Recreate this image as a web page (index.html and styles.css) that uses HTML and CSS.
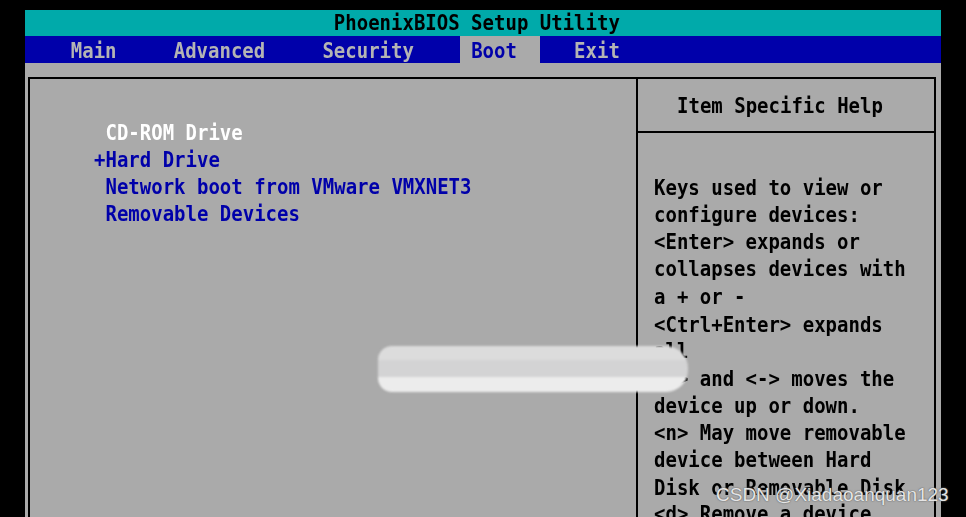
FILE: index.html
```html
<!DOCTYPE html>
<html lang="en">
<head>
    <meta charset="UTF-8" />
    <meta name="viewport" content="width=device-width, initial-scale=1" />
    <title>PhoenixBIOS Setup Utility</title>
    <link rel="stylesheet" href="styles.css">
</head>
<body>

    <div class="screen">

        <!-- Barra de titulo -->
        <div class="title-bar"><span class="glyphs">                           PhoenixBIOS Setup Utility</span></div>

        <!-- Menu superior -->
        <div class="menu-bar">
            <span class="glyphs">    Main     Advanced     Security    </span><span class="tab-active"><span class="glyphs"> Boot  </span></span><span class="glyphs">   Exit</span>
        </div>

        <div class="frame">

            <!-- Orden de arranque -->
            <div class="boot-list">
                <div class="rows"><span class="item-selected"> CD-ROM Drive</span>
<span class="item">+Hard Drive</span>
<span class="item"> Network boot from VMware VMXNET3</span>
<span class="item"> Removable Devices</span></div>
            </div>

            <!-- Ayuda -->
            <div class="help">
                <div class="help-title"><span class="glyphs">Item Specific Help</span></div>
                <div class="help-text">
                    <div class="rows">Keys used to view or
configure devices:
&lt;Enter&gt; expands or
collapses devices with
a + or -
&lt;Ctrl+Enter&gt; expands
all
&lt;+&gt; and &lt;-&gt; moves the
device up or down.
&lt;n&gt; May move removable
device between Hard
Disk or Removable Disk
&lt;d&gt; Remove a device</div>
                </div>
            </div>

        </div>
    </div>

    <div class="redacted"></div>
    <div class="watermark">CSDN @Xiadaoanquan123</div>

</body>
</html>
```

FILE: styles.css
```css
* {
    box-sizing: border-box;
}
html, body {
    margin: 0;
    height: 100%;
    background-color: #000;
    overflow: hidden;
}
body {
    padding: 10px 0 0 25px;
}
.screen {
    width: 916px;
    height: 507px;
    background-color: #aaaaaa;
    font-family: "DejaVu Sans Mono", monospace;
    font-weight: bold;
    font-size: 19px;
    display: flex;
    flex-direction: column;
}
.glyphs {
    display: inline-block;
    white-space: pre;
    transform: scaleY(1.15);
}
.title-bar {
    height: 26px;
    line-height: 25px;
    background-color: #00aaaa;
    color: #000;
}
.menu-bar {
    height: 27px;
    line-height: 29px;
    background-color: #0000aa;
    color: #b4b4b4;
    display: flex;
}
.tab-active {
    background-color: #aaaaaa;
    color: #0000aa;
}
.frame {
    flex: 1;
    margin: 14px 5px 0 3px;
    border: 2px solid #000;
    border-bottom: none;
    display: flex;
}
.boot-list {
    width: 608px;
    border-right: 2px solid #000;
    padding: 40px 0 0 64px;
}
.rows {
    white-space: pre;
    line-height: 23.7px;
    transform: scaleY(1.15);
    transform-origin: top left;
}
.item {
    color: #0000aa;
}
.item-selected {
    color: #fff;
}
.help {
    flex: 1;
    display: flex;
    flex-direction: column;
}
.help-title {
    height: 54px;
    border-bottom: 2px solid #000;
    padding-left: 39px;
    display: flex;
    align-items: center;
    color: #000;
}
.help-text {
    padding: 40.5px 0 0 16px;
    color: #000;
}
.redacted {
    position: absolute;
    left: 378px;
    top: 346px;
    width: 310px;
    height: 46px;
    border-radius: 14px 22px 22px 14px;
    background: linear-gradient(#dcdcdc 0 14px, #d3d3d4 14px 31px, #ececec 31px);
    filter: blur(1px);
}
.watermark {
    position: absolute;
    left: 716px;
    top: 484px;
    font-family: "Liberation Sans", Arial, sans-serif;
    font-size: 19px;
    color: rgba(255, 255, 255, 0.85);
    text-shadow: 0 0 1px #555, 0 0 2px #777;
}
```
